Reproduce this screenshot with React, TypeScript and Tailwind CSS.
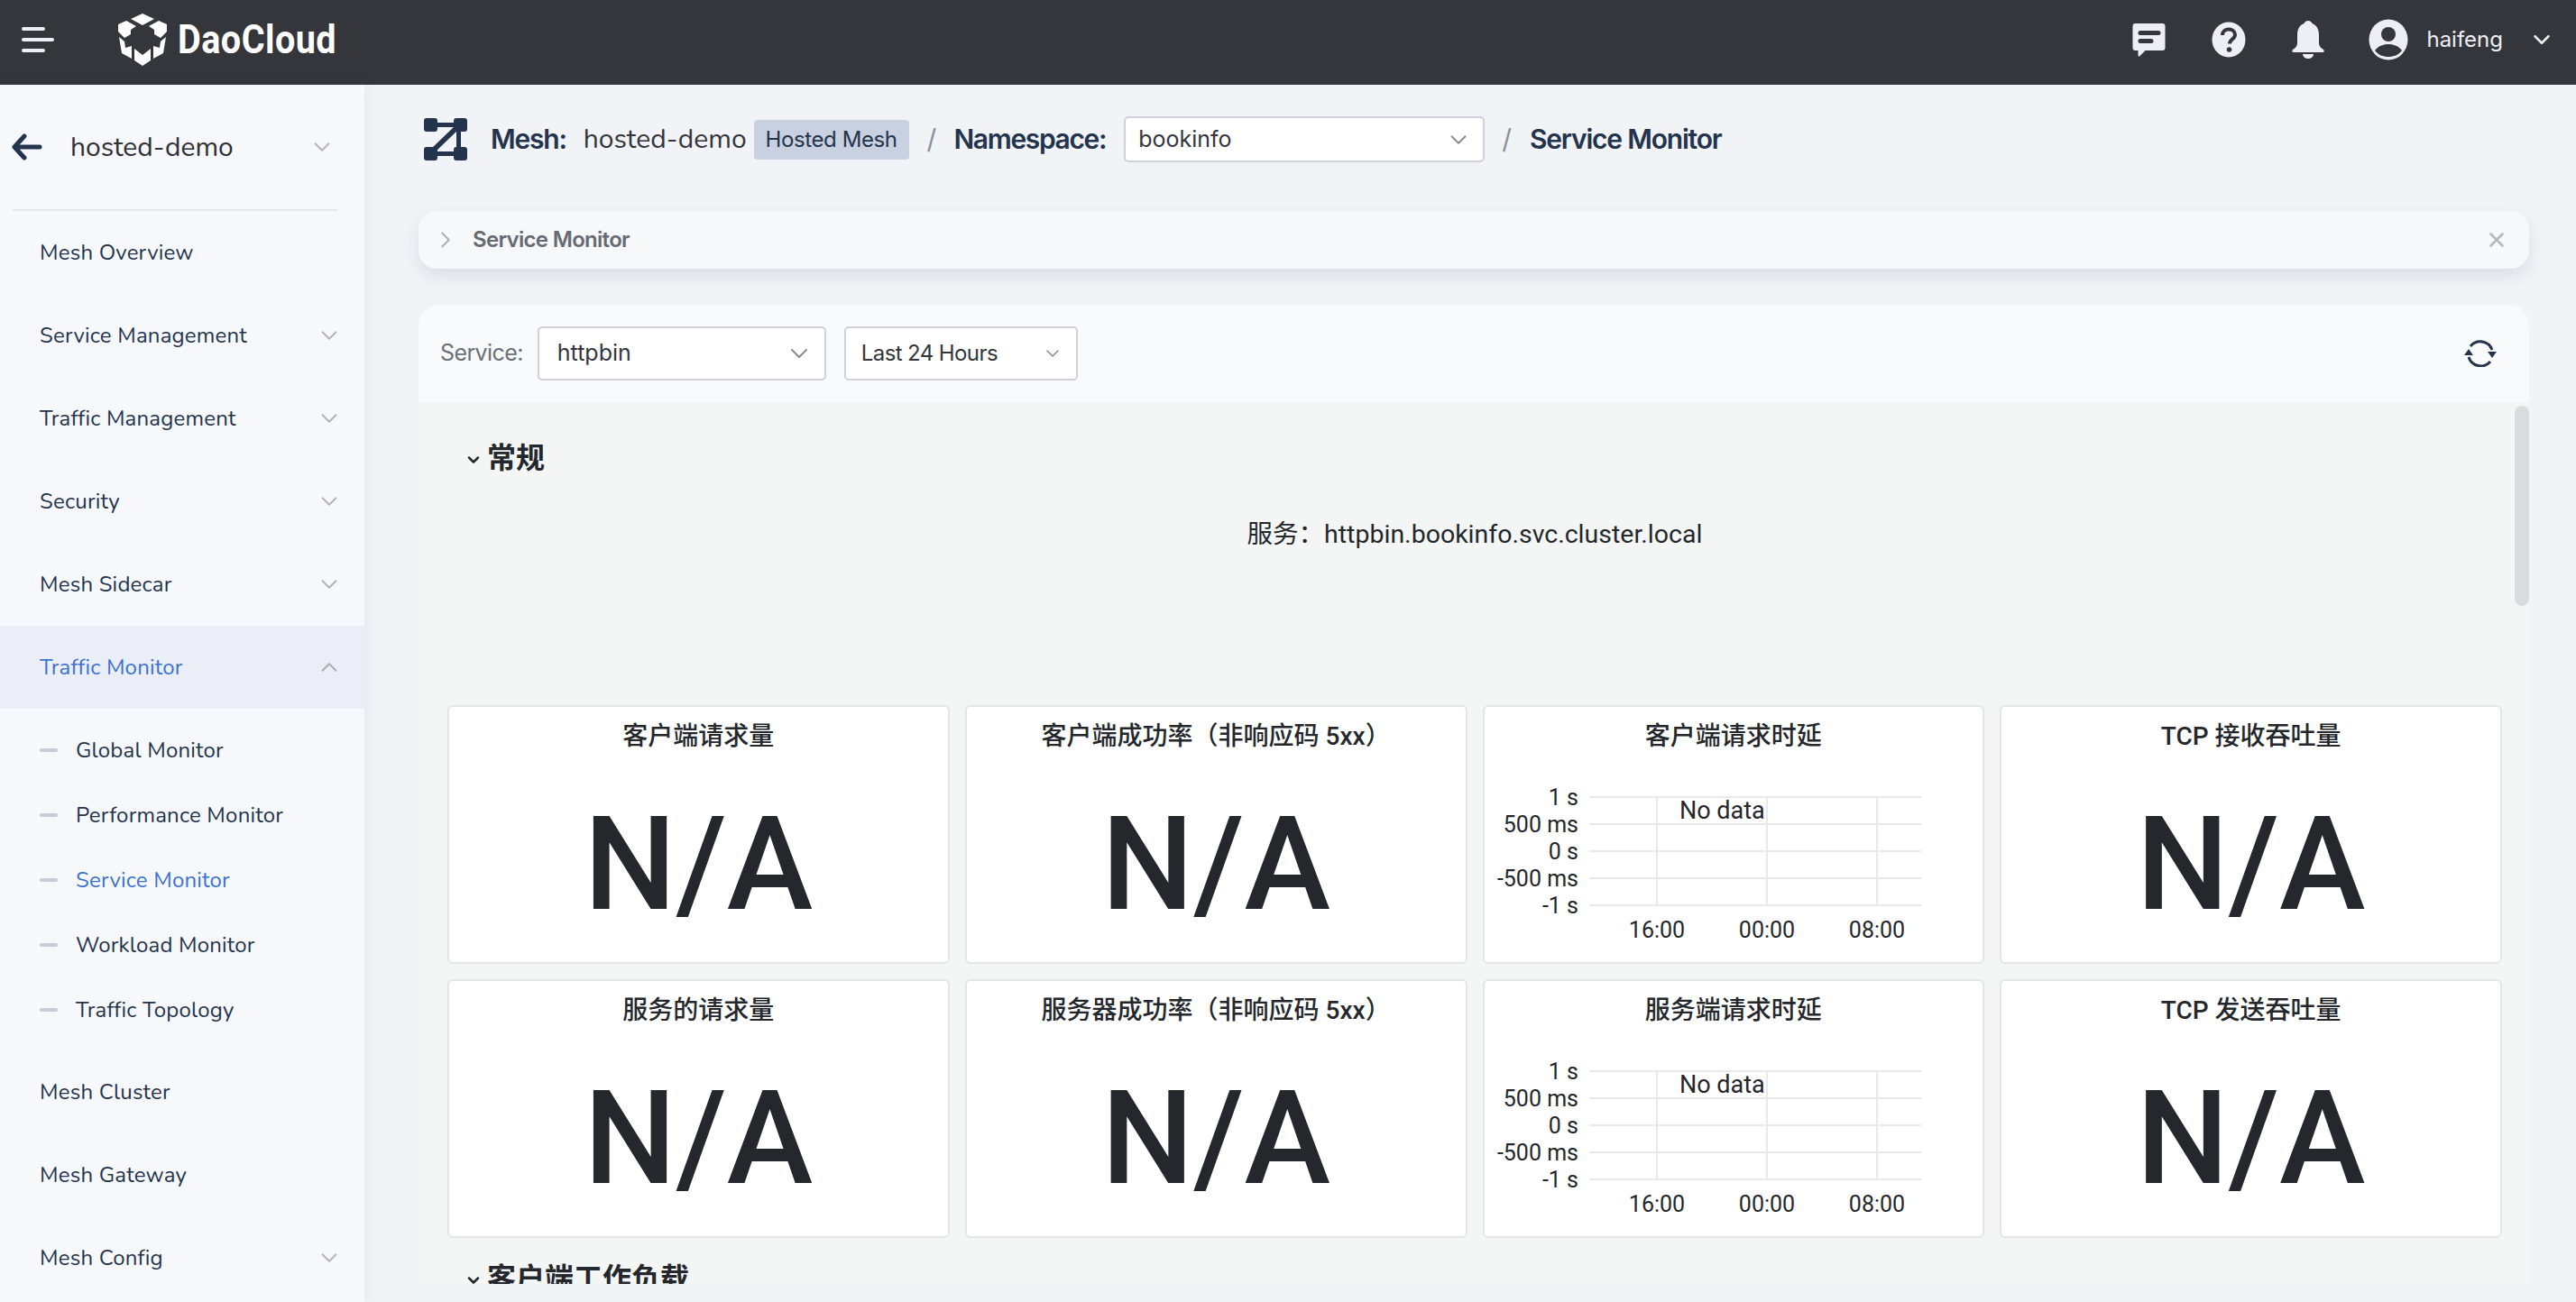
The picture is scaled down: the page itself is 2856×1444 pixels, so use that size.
import { ChevronDown, ChevronRight, ChevronUp, X } from 'lucide-react';

const uiFont = "font-['Nunito','Lato','Noto_Sans',sans-serif]";
const panelFont = "font-['Roboto','Noto_Sans_CJK_SC',sans-serif]";

const Logo = () => (
  <svg width="56" height="58" viewBox="0 0 56 58" fill="#fff">
    <path d="M28 0 L41 6 L28 13 L15 6 Z" />
    <path d="M10 8 L21 14 L15 18 L15 23 L8 27 L1 20 L1 12 Z" />
    <path d="M46 8 L35 14 L41 18 L41 23 L48 27 L55 20 L55 12 Z" />
    <path d="M2 26 L8 31 L9 38 L16 36 L16 50 L5 44 Z" />
    <path d="M54 26 L48 31 L47 38 L40 36 L40 50 L51 44 Z" />
    <path d="M19 39 L28 46 L37 39 L37 52 L28 58 L19 52 Z" />
  </svg>
);

const MeshIcon = () => (
  <svg width="48" height="47" viewBox="0 0 48 47" fill="#24344d">
    <rect x="0" y="0" width="15" height="15" rx="3" />
    <rect x="33" y="0" width="15" height="15" rx="3" />
    <rect x="0" y="32" width="15" height="15" rx="3" />
    <rect x="33" y="32" width="15" height="15" rx="3" />
    <path d="M12 5h24v5H12zM12 37h24v5H12z" />
    <path d="M34 9l5 3-26 25-4-4zM36 12h5v24h-5z" />
  </svg>
);

const RefreshIcon = () => (
  <svg width="36" height="30" viewBox="0 0 36 30" fill="none">
    <path d="M7 7A14 14 0 0 1 31 11" stroke="#24344d" strokeWidth="3" />
    <path d="M5 19A14 14 0 0 0 29 24" stroke="#24344d" strokeWidth="3" />
    <path d="M26 13h10l-5 7zM0 17h10l-5-7z" fill="#24344d" />
  </svg>
);

const MessageIcon = () => (
  <svg width="39" height="38" viewBox="0 0 38 38">
    <path
      d="M4 1h30a3 3 0 0 1 3 3v24a3 3 0 0 1-3 3H15l-6 6c-1 1-2 .5-2-1v-5H4a3 3 0 0 1-3-3V4a3 3 0 0 1 3-3z"
      fill="#eceff6"
    />
    <rect x="7" y="9" width="25" height="5" rx="2.500" fill="#35363c" />
    <rect x="7" y="18" width="17" height="5" rx="2.500" fill="#35363c" />
  </svg>
);

const HelpIcon = () => (
  <svg width="38" height="40" viewBox="0 0 38 40">
    <ellipse cx="19" cy="20" rx="18.500" ry="19.500" fill="#eceff6" />
    <path
      d="M12 15c0-4 3-6.500 7-6.500s7 2.500 7 6c0 5-6 5-6 10"
      fill="none"
      stroke="#35363c"
      strokeWidth="4"
    />
    <circle cx="19.500" cy="31" r="2.800" fill="#35363c" />
  </svg>
);

const BellIcon = () => (
  <svg width="36" height="42" viewBox="0 0 36 42" fill="#eceff6">
    <path d="M18 0c2.500 0 4 1.500 4.500 3C28 5 30 10 30 16v9c0 3 2 5 5 7 1 1 1 3-1 3H2c-2 0-2-2-1-3 3-2 5-4 5-7v-9C6 10 8 5 13.500 3 14 1.500 15.500 0 18 0z" />
    <path d="M12 37h12c0 3-3 5-6 5s-6-2-6-5z" />
  </svg>
);

const UserIcon = () => (
  <svg width="44" height="46" viewBox="0 0 44 46">
    <ellipse cx="22" cy="23" rx="21.500" ry="22.500" fill="#eceff6" />
    <circle cx="22" cy="17" r="8" fill="#35363c" />
    <path d="M7 35c4-5 9-7 15-7s11 2 15 7c-4 5-9 7-15 7s-11-2-15-7z" fill="#35363c" />
  </svg>
);

const Header = () => (
  <header className="flex h-[94px] shrink-0 items-center bg-[#35363c] pr-[23px] pb-[6px] pl-[24px]">
    <div className="flex w-[36px] flex-col gap-[8px]">
      <div className="h-[4px] w-[26px] rounded-full bg-[#eceff6]" />
      <div className="h-[4px] w-[36px] rounded-full bg-[#eceff6]" />
      <div className="h-[4px] w-[26px] rounded-full bg-[#eceff6]" />
    </div>
    <div className="ml-[70px] flex items-center gap-[11px]">
      <Logo />
      <span className="w-[173px] origin-left scale-x-[0.9] font-['Roboto',sans-serif] text-[44px] leading-none font-bold tracking-[0.5px] whitespace-nowrap text-white">
        DaoCloud
      </span>
    </div>
    <div className="ml-auto flex items-center">
      <MessageIcon />
      <div className="ml-[50px]"><HelpIcon /></div>
      <div className="ml-[51px]"><BellIcon /></div>
      <div className="ml-[49px]"><UserIcon /></div>
      <span className="ml-[20px] font-['Inter',sans-serif] text-[24px] text-[#eceff6]">haifeng</span>
      <ChevronDown size={30} strokeWidth={2} className="ml-[28px] text-[#eceff6]" />
    </div>
  </header>
);

const navItems = [
  { label: 'Mesh Overview' },
  { label: 'Service Management', arrow: true },
  { label: 'Traffic Management', arrow: true },
  { label: 'Security', arrow: true },
  { label: 'Mesh Sidecar', arrow: true },
];

const subItems = ['Global Monitor', 'Performance Monitor', 'Service Monitor', 'Workload Monitor', 'Traffic Topology'];

const NavRow = ({ label, arrow }: { label: string; arrow?: boolean }) => (
  <div className="flex h-[92px] items-center justify-between pr-[24px] pb-[1px] pl-[44px] text-[24px] tracking-[0.2px] text-[#24344d]">
    <span>{label}</span>
    {arrow && <ChevronDown size={30} strokeWidth={1.5} className="text-[#b0b4bc]" />}
  </div>
);

const Sidebar = () => (
  <aside className={`z-10 w-[404px] shrink-0 overflow-hidden bg-[#f7f8fc] shadow-[4px_0_14px_rgba(40,50,80,0.05)] ${uiFont}`}>
    <div className="flex h-[138px] items-center pr-[32px] pl-[13px]">
      <svg width="34" height="30" viewBox="0 0 34 30" fill="none" stroke="#24344d" strokeWidth="5" strokeLinecap="round" strokeLinejoin="round">
        <path d="M31 15H3M14 3L3 15l11 12" />
      </svg>
      <span className="ml-[31px] text-[30px] text-[#2f3136]">hosted-demo</span>
      <ChevronDown size={30} strokeWidth={1.5} className="ml-auto text-[#b0b4bc]" />
    </div>
    <div className="mx-[14px] h-[2px] w-[360px] bg-[#e4e6eb]" />
    {navItems.map((item) => (
      <NavRow key={item.label} label={item.label} arrow={item.arrow} />
    ))}
    <div className="flex h-[92px] items-center justify-between bg-[#ebeef6] pr-[24px] pb-[1px] pl-[44px] text-[24px] tracking-[0.2px] text-[#3a72cf]">
      <span>Traffic Monitor</span>
      <ChevronUp size={30} strokeWidth={1.5} className="text-[#a9adb5]" />
    </div>
    <div className="pt-[10px] pb-[9px]">
      {subItems.map((item) => (
        <div
          key={item}
          className={`flex h-[72px] items-center pl-[44px] text-[24px] tracking-[0.2px] ${item === 'Service Monitor' ? 'text-[#3a72cf]' : 'text-[#24344d]'}`}
        >
          <div className="mr-[20px] h-[4px] w-[20px] rounded-full bg-[#c8ccd6]" />
          {item}
        </div>
      ))}
    </div>
    <NavRow label="Mesh Cluster" />
    <NavRow label="Mesh Gateway" />
    <NavRow label="Mesh Config" arrow />
  </aside>
);

const Select = ({ value, className, chevron }: { value: string; className: string; chevron: number }) => (
  <div className={`flex items-center justify-between rounded-[5px] border-2 border-[#cdd1dc] bg-white ${className}`}>
    <span>{value}</span>
    <ChevronDown size={chevron} strokeWidth={1.5} className="text-[#858b96]" />
  </div>
);

const Breadcrumb = () => (
  <div className="mt-[35px] flex h-[51px] items-center font-['Inter',sans-serif] text-[#24344d]">
    <div className="ml-[6px]"><MeshIcon /></div>
    <span className="ml-[26px] text-[30px] font-semibold tracking-[-1.2px]">Mesh:</span>
    <span className={`ml-[19px] text-[30px] text-[#33363c] ${uiFont}`}>hosted-demo</span>
    <span className="ml-[8px] flex h-[44px] w-[172px] items-center justify-center rounded-[4px] bg-[#c9d0e0] text-[24px] tracking-[-0.4px]">
      Hosted Mesh
    </span>
    <span className="ml-[20px] text-[30px] text-[#8d9098]">/</span>
    <span className="ml-[19px] text-[30px] font-semibold tracking-[-1.35px]">Namespace:</span>
    <Select value="bookinfo" chevron={30} className="ml-[20px] h-[51px] w-[400px] pr-[12px] pl-[14px] text-[25px] text-[#33363c]" />
    <span className="ml-[19px] text-[30px] text-[#8d9098]">/</span>
    <span className="ml-[20px] text-[30px] font-semibold tracking-[-1.2px]">Service Monitor</span>
  </div>
);

const NotApplicable = () => (
  <div className="flex flex-1 items-center justify-center pt-[4px] text-[144px] leading-none font-medium text-[#24272b]">
    N/A
  </div>
);

const yLabels = ['1 s', '500 ms', '0 s', '-500 ms', '-1 s'];
const xLabels = ['16:00', '00:00', '08:00'];

const LatencyChart = () => (
  <svg width="552" height="218" viewBox="0 0 552 218" className="font-['Roboto',sans-serif]">
    {yLabels.map((label, i) => (
      <g key={label}>
        <line x1="116" x2="484" y1={37 + i * 30} y2={37 + i * 30} stroke="#e8e9ea" strokeWidth="2" />
        <text x="104" y={46 + i * 30} textAnchor="end" fontSize="25" fill="#24272b">{label}</text>
      </g>
    ))}
    {xLabels.map((label, i) => (
      <g key={label}>
        <line x1={191 + i * 122} x2={191 + i * 122} y1="37" y2="157" stroke="#e8e9ea" strokeWidth="2" />
        <text x={191 + i * 122} y="193" textAnchor="middle" fontSize="25" fill="#24272b">{label}</text>
      </g>
    ))}
    <text x="216" y="61" fontSize="27" fill="#24272b">No data</text>
  </svg>
);

const Card = ({ title, chart }: { title: string; chart?: boolean }) => (
  <div className="flex h-[287px] flex-col rounded-[6px] border-2 border-[#e4e6e6] bg-white">
    <div className="flex h-[63px] shrink-0 items-center justify-center pt-[3px] text-[28px] font-medium text-[#24272b]">
      {title}
    </div>
    {chart ? <LatencyChart /> : <NotApplicable />}
  </div>
);

const SectionHead = ({ title, className }: { title: string; className: string }) => (
  <div className={`flex items-center text-[32px] font-bold text-[#24272b] ${className}`}>
    <ChevronDown size={20} strokeWidth={3} className="mt-[4px] mr-[5px]" />
    {title}
  </div>
);

const Panel = () => (
  <section className="mt-[40px] mb-[20px] flex min-h-0 flex-1 flex-col overflow-hidden rounded-t-[24px]">
    <div className="flex h-[108px] shrink-0 items-center bg-[#f9fafc] pr-[36px] pl-[24px] font-['Inter',sans-serif]">
      <span className="text-[25px] tracking-[-0.6px] text-[#6c7078]">Service:</span>
      <Select value="httpbin" chevron={32} className="ml-[16px] h-[60px] w-[320px] pr-[12px] pl-[20px] text-[25px] text-[#33363c]" />
      <Select value="Last 24 Hours" chevron={24} className="ml-[20px] h-[60px] w-[259px] pr-[14px] pl-[17px] text-[24px] tracking-[-0.6px] text-[#33363c]" />
      <div className="ml-auto"><RefreshIcon /></div>
    </div>
    <div className={`relative flex-1 overflow-hidden bg-[#f4f6f6] pr-[30px] pl-[32px] ${panelFont}`}>
      <div className="absolute top-[4px] right-0 h-[222px] w-[16px] rounded-full bg-[#dadbde]" />
      <SectionHead title="常规" className="mt-[40px] h-[44px] pl-[19px]" />
      <div className="mt-[43px] h-[40px] text-center text-[28.5px] leading-[40px] text-[#24272b]">
        服务：httpbin.bookinfo.svc.cluster.local
      </div>
      <div className="mt-[169px] grid grid-cols-4 gap-x-[17px] gap-y-[17px]">
        <Card title="客户端请求量" />
        <Card title="客户端成功率（非响应码 5xx）" />
        <Card title="客户端请求时延" chart />
        <Card title="TCP 接收吞吐量" />
        <Card title="服务的请求量" />
        <Card title="服务器成功率（非响应码 5xx）" />
        <Card title="服务端请求时延" chart />
        <Card title="TCP 发送吞吐量" />
      </div>
      <SectionHead title="客户端工作负载" className="mt-[23px] h-[44px] pl-[19px]" />
    </div>
  </section>
);

export default function App() {
  return (
    <div className="flex h-screen w-full flex-col overflow-hidden bg-[#f1f3f7]">
      <Header />
      <div className="flex min-h-0 flex-1">
        <Sidebar />
        <main className="flex min-w-0 flex-1 flex-col pr-[52px] pl-[60px]">
          <Breadcrumb />
          <div className="mt-[54px] flex h-[64px] shrink-0 items-center rounded-[20px] bg-[#f7f8fa] pr-[23px] pl-[15px] font-['Inter',sans-serif] shadow-[0_8px_18px_rgba(40,50,80,0.1)]">
            <ChevronRight size={30} strokeWidth={1.5} className="text-[#a9adb5]" />
            <span className="ml-[15px] text-[24px] font-semibold tracking-[-0.7px] text-[#666a72]">Service Monitor</span>
            <X size={26} strokeWidth={2.5} className="ml-auto text-[#b5b8bf]" />
          </div>
          <Panel />
        </main>
      </div>
    </div>
  );
}
